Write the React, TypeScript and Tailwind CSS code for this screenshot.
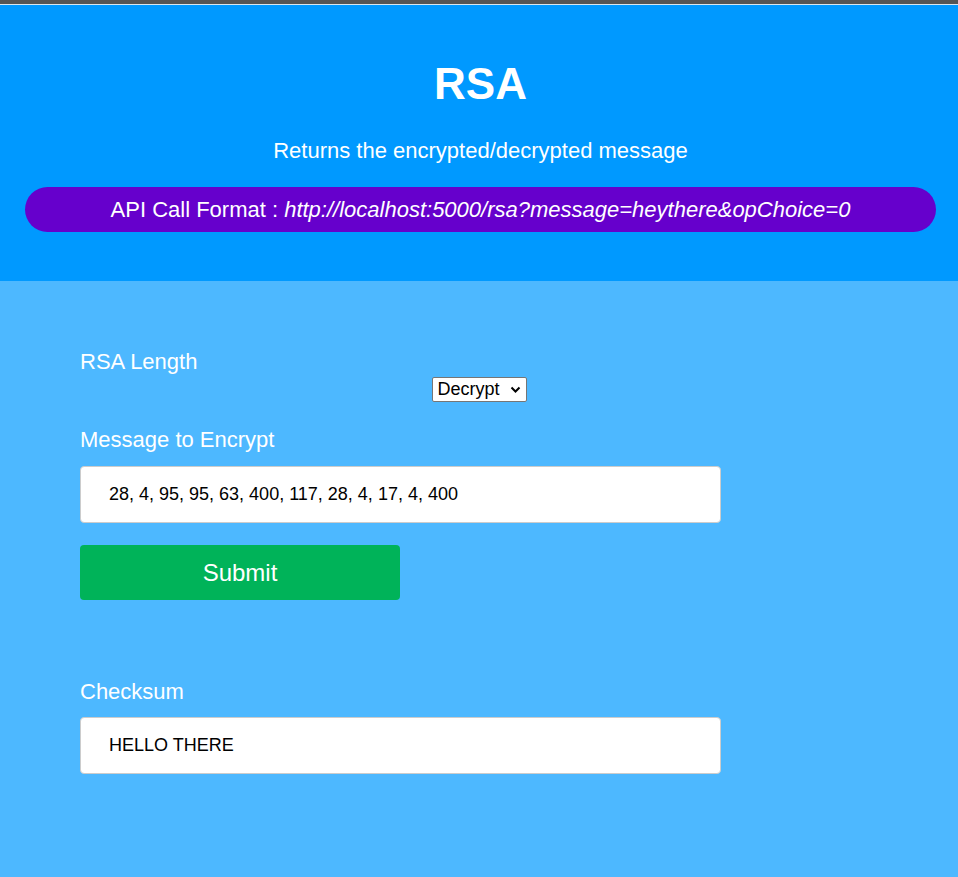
import React from "react";

export default function App() {
  return (
    <div className="min-h-[877px] w-full bg-[#4db8ff] text-white" style={{ fontFamily: '"Liberation Sans", Arial, sans-serif' }}>
      <div className="h-[4px] bg-[#555555]" />
      <div className="h-[1px] bg-[#d9e6ee]" />
      <header className="flex h-[276px] flex-col items-center bg-[#0099ff] pl-[25px] pr-[22px] pt-[56px]">
        <h1 className="text-[44px] font-bold leading-[46px]">RSA</h1>
        <p className="mt-[31px] text-[22px] leading-[26px]">Returns the encrypted/decrypted message</p>
        <div className="mt-[23px] flex h-[45px] w-full items-center justify-center rounded-full bg-[#6600cc] text-[22px]">
          <span>
            API Call Format : <i>http://localhost:5000/rsa?message=heythere&amp;opChoice=0</i>
          </span>
        </div>
      </header>
      <main className="flex flex-col px-[80px] pt-[69px]">
        <label className="text-[22px] leading-[24px]">RSA Length</label>
        <div className="mt-[3px] flex w-[798px] justify-center">
          <div className="relative h-[25px] w-[95px]">
            <select
              defaultValue="Decrypt"
              className="h-[25px] w-[95px] appearance-none rounded-[2px] border border-[#767676] bg-white pl-[5px] text-[18px] leading-[23px] text-black"
              style={{ fontFamily: '"Liberation Sans", Arial, sans-serif' }}
            >
              <option>Encrypt</option>
              <option>Decrypt</option>
            </select>
            <svg className="pointer-events-none absolute right-[6px] top-[9px]" width="11" height="8" viewBox="0 0 11 8">
              <path d="M1.5 1.5 L5.5 5.5 L9.5 1.5" fill="none" stroke="#000" strokeWidth="2" />
            </svg>
          </div>
        </div>
        <label className="mt-[26px] text-[22px] leading-[24px]">Message to Encrypt</label>
        <div className="mt-[14px] flex h-[57px] w-[641px] items-center rounded-[4px] border border-[#cccccc] bg-white pl-[28px] text-[18px] text-black">
          28, 4, 95, 95, 63, 400, 117, 28, 4, 17, 4, 400
        </div>
        <button className="mt-[22px] flex h-[55px] w-[320px] items-center justify-center rounded-[4px] bg-[#00b359] text-[24px] text-white">
          Submit
        </button>
        <label className="mt-[80px] text-[22px] leading-[24px]">Checksum</label>
        <div className="mt-[13px] flex h-[57px] w-[641px] items-center rounded-[4px] border border-[#cccccc] bg-white pl-[28px] text-[18px] text-black">
          HELLO THERE
        </div>
      </main>
    </div>
  );
}
